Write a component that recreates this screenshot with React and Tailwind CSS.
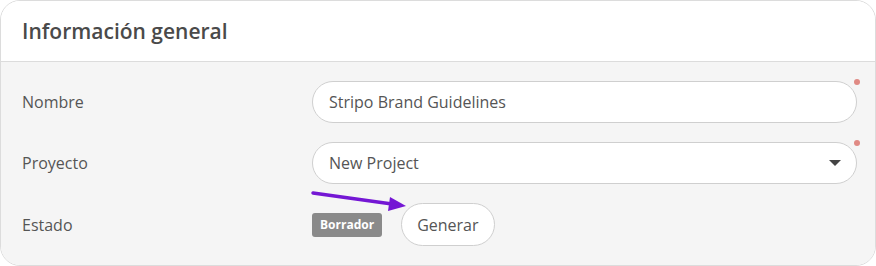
import React from "react";

const FONT = { fontFamily: '"Open Sans", "Liberation Sans", sans-serif' };

function RequiredDot() {
  return <span className="absolute -top-[2px] -right-[3px] w-[6px] h-[6px] rounded-full bg-[#e08a84]" />;
}

function Row({ label, children }) {
  return (
    <div className="flex items-center">
      <div className="w-[290px] text-[16px] text-[#555]">{label}</div>
      <div className="flex-1">{children}</div>
    </div>
  );
}

export default function App() {
  return (
    <div className="w-[876px] h-[266px] bg-white" style={FONT}>
      <div className="w-[876px] h-[266px] border border-[#dcdcdc] rounded-[20px] overflow-hidden flex flex-col">
        <div className="h-[61px] shrink-0 bg-white border-b border-[#dcdcdc] flex items-center px-[21px]">
          <h2 className="text-[21px] font-semibold text-[#4a4a4a] leading-none">Información general</h2>
        </div>
        <div className="flex-1 bg-[#f5f5f5] pl-[21px] pr-[18px] pt-[19px] flex flex-col gap-[19px]">
          <Row label="Nombre">
            <div className="relative">
              <div className="h-[42px] rounded-full border border-[#cfcfcf] bg-white flex items-center px-[16px] text-[16px] text-[#555]">
                Stripo Brand Guidelines
              </div>
              <RequiredDot />
            </div>
          </Row>
          <Row label="Proyecto">
            <div className="relative">
              <div className="h-[42px] rounded-full border border-[#cfcfcf] bg-white flex items-center justify-between pl-[16px] pr-[15px] text-[16px] text-[#555]">
                <span>New Project</span>
                <svg width="12" height="6" viewBox="0 0 12 6">
                  <path d="M0 0 L12 0 L6 6 Z" fill="#444" />
                </svg>
              </div>
              <RequiredDot />
            </div>
          </Row>
          <Row label="Estado">
            <div className="relative flex items-center gap-[19px]">
              <span className="h-[24px] px-[8px] rounded-[3px] bg-[#8a8a8a] text-white text-[12px] font-bold flex items-center">
                Borrador
              </span>
              <button className="h-[43px] px-[15px] rounded-full border border-[#cfcfcf] bg-white text-[16px] text-[#555]">
                Generar
              </button>
              <svg className="absolute left-[-2px] top-[-12px]" width="100" height="22" viewBox="0 0 100 22">
                <line x1="3" y1="2" x2="82" y2="13" stroke="#7417d4" strokeWidth="3.5" strokeLinecap="round" />
                <path d="M80 6 L96 15 L78 20 Z" fill="#7417d4" />
              </svg>
            </div>
          </Row>
        </div>
      </div>
    </div>
  );
}
